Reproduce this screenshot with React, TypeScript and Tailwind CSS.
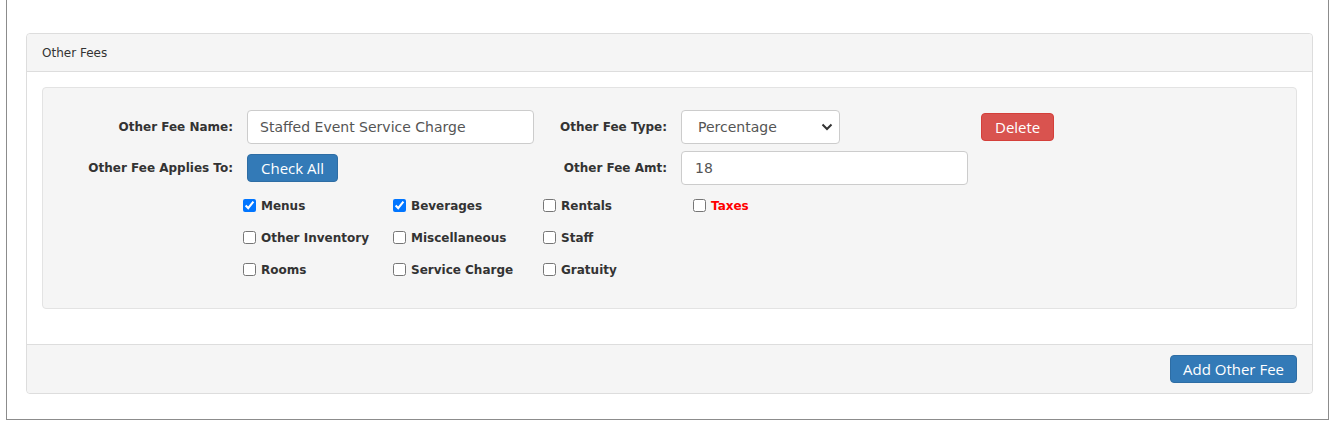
import React from "react";

const checks: { label: string; checked?: boolean; red?: boolean }[][] = [
  [
    { label: "Menus", checked: true },
    { label: "Beverages", checked: true },
    { label: "Rentals" },
    { label: "Taxes", red: true },
  ],
  [{ label: "Other Inventory" }, { label: "Miscellaneous" }, { label: "Staff" }],
  [{ label: "Rooms" }, { label: "Service Charge" }, { label: "Gratuity" }],
];

const labelCls =
  "text-right text-[12px] font-bold text-[#333] font-['DejaVu_Sans',Verdana,sans-serif]";
const btnFont = "font-['Open_Sans',sans-serif] text-[15px] text-white";

export default function App() {
  return (
    <div className="bg-white w-[1338px] h-[432px] font-['DejaVu_Sans',Verdana,sans-serif]">
      <div className="ml-[6px] w-[1323px] border-l border-r border-b border-[#8c8c8c] pl-[19px] pr-[15px] pt-[33px] pb-[25px] bg-white">
        <div className="border border-[#dddddd] rounded-[4px] bg-white">
          <div className="h-[38px] bg-[#f5f5f5] border-b border-[#dddddd] rounded-t-[4px] pl-[15px] flex items-center text-[12px] text-[#333]">
            Other Fees
          </div>
          <div className="p-[15px]">
            <div className="bg-[#f5f5f5] border border-[#e3e3e3] rounded-[4px] pt-[22px] pb-[22px] mb-[20px]">
              <div className="grid grid-cols-[190px_287px_119px_287px_auto] gap-x-[14px] gap-y-[7px] items-center">
                <div className={labelCls}>Other Fee Name:</div>
                <div className="h-[34px] border border-[#cccccc] rounded-[4px] bg-white flex items-center pl-[12px] text-[14px] text-[#555]">
                  Staffed Event Service Charge
                </div>
                <div className={labelCls}>Other Fee Type:</div>
                <div>
                  <div className="w-[159px] h-[34px] border border-[#cccccc] rounded-[4px] bg-white flex items-center justify-between pl-[16px] pr-[4px] text-[14px] text-[#555]">
                    <span>Percentage</span>
                    <svg width="12" height="8" viewBox="0 0 12 8" className="mr-[2px]">
                      <polyline points="1.5,1.5 6,6 10.5,1.5" fill="none" stroke="#333" strokeWidth="2" />
                    </svg>
                  </div>
                </div>
                <div className="flex">
                  <button className={`h-[28px] px-[13px] ml-[-1px] bg-[#d9534f] border border-[#d43f3a] rounded-[4px] flex items-center ${btnFont}`}>
                    Delete
                  </button>
                </div>

                <div className={labelCls}>Other Fee Applies To:</div>
                <div className="flex">
                  <button className={`h-[28px] px-[13px] bg-[#337ab7] border border-[#2e6da4] rounded-[4px] flex items-center ${btnFont}`}>
                    Check All
                  </button>
                </div>
                <div className={labelCls}>Other Fee Amt:</div>
                <div className="h-[34px] border border-[#cccccc] rounded-[4px] bg-white flex items-center pl-[13px] text-[14px] text-[#555]">
                  18
                </div>
                <div />
              </div>

              <div className="mt-[5px] ml-[200px] flex flex-col">
                {checks.map((row, i) => (
                  <div key={i} className="h-[32px] grid grid-cols-[150px_150px_150px_150px] items-center">
                    {row.map((c) => (
                      <label key={c.label} className="flex items-center gap-[5px]">
                        <input
                          type="checkbox"
                          defaultChecked={c.checked}
                          className="w-[13px] h-[13px] m-0 mt-[-2px]"
                        />
                        <span
                          className={`text-[12px] font-bold ${c.red ? "text-[#ff0000]" : "text-[#333]"}`}
                        >
                          {c.label}
                        </span>
                      </label>
                    ))}
                  </div>
                ))}
              </div>
            </div>
          </div>
          <div className="bg-[#f5f5f5] border-t border-[#dddddd] rounded-b-[4px] py-[10px] pr-[15px] flex justify-end">
            <button className={`h-[28px] px-[12px] bg-[#337ab7] border border-[#2e6da4] rounded-[4px] flex items-center ${btnFont}`}>
              Add Other Fee
            </button>
          </div>
        </div>
      </div>
    </div>
  );
}
